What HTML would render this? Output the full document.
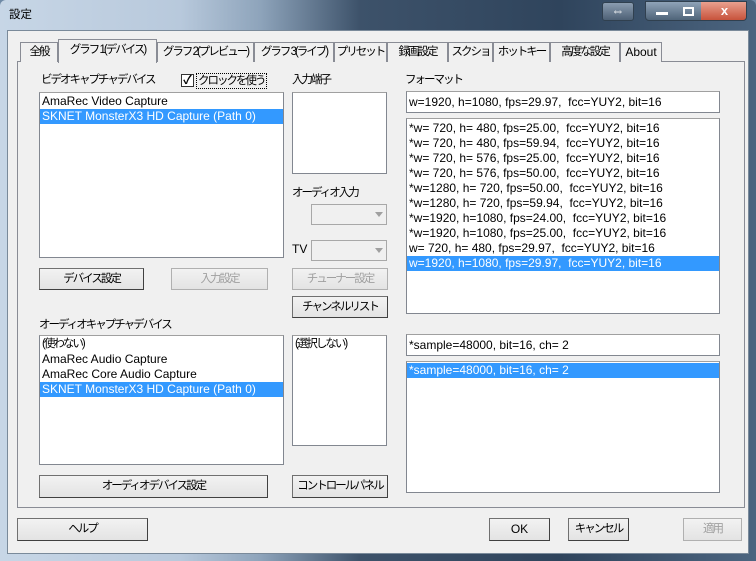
<!DOCTYPE html>
<html><head><meta charset="utf-8"><style>
*{box-sizing:border-box;margin:0;padding:0}
body{width:756px;height:561px;position:relative;overflow:hidden;background:#6f8aa6;font-family:"Liberation Sans","Noto Sans CJK JP",sans-serif;font-size:12px;color:#000}
.a{position:absolute}
.title{left:0;top:0;width:756px;height:561px;background:linear-gradient(90deg,#c7d6e6 0,#b8c9dc 180px,#8ea4bb 260px,#3d526a 360px,#2f445c 560px,#4c6580 756px);border-radius:6px 6px 0 0}
.client{left:7px;top:30px;width:742px;height:524px;background:#f0f0f0;border:1px solid #7a8a9a}
.lbl{position:absolute;white-space:nowrap;font-size:11.5px;line-height:14px;letter-spacing:-2px}
.box{position:absolute;background:#fff;border:1px solid #828790;border-top-color:#a0a0a0;white-space:nowrap;overflow:hidden}
.row{height:15px;line-height:15px;padding-left:2px;white-space:nowrap}
.j{letter-spacing:-2px;font-size:11.5px}
.sel{background:#3399ff;color:#fff}
.btn{position:absolute;white-space:nowrap;letter-spacing:-2px;background:linear-gradient(#f2f2f2,#e3e3e3);border:1px solid #707070;border-right-color:#404040;border-bottom-color:#404040;text-align:center;line-height:20px;font-size:11.5px}
.dis{color:#a0a0a0;border-color:#b0b0b0}
.tab{position:absolute;top:42px;height:20px;white-space:nowrap;letter-spacing:-2px;border:1px solid #898c95;border-bottom:none;background:#f0f0f0;line-height:18px;text-align:center;font-size:11.5px;overflow:hidden}
.combo{position:absolute;background:#f0f0f0;border:1px solid #a8a8a8}
.combo:after{content:"";position:absolute;right:3px;top:7px;border:4px solid transparent;border-top:5px solid #a0a0a0}
</style></head><body>
<div class="a title"></div>
<div class="lbl" style="left:9px;top:8px;letter-spacing:0">設定</div>
<div class="a" style="left:602px;top:2px;width:32px;height:19px;border:1px solid #30404f;border-radius:3px;background:linear-gradient(#8a9cb0,#4d6075);color:#fff;text-align:center;line-height:16px;font-size:13px">⇔</div>
<div class="a" style="left:645px;top:1px;width:102px;height:20px;border:1px solid #30404f;border-radius:0 0 4px 4px;background:linear-gradient(#8fa3b8,#4f6479);overflow:hidden">
<div class="a" style="left:10px;top:10px;width:12px;height:3px;background:#fff"></div>
<div class="a" style="left:37px;top:5px;width:11px;height:9px;border:2px solid #fff"></div>
<div class="a" style="left:55px;top:0;width:47px;height:20px;background:linear-gradient(#e8a08f,#c44a32);color:#fff;text-align:center;font-weight:bold;line-height:18px;font-size:13px">x</div>
</div>
<div class="a client"></div>
<div class="a" style="left:17px;top:61px;width:728px;height:447px;border:1px solid #898c95;background:#f0f0f0"></div>
<div class="tab" style="left:20px;width:38px">全般</div>
<div class="tab" style="left:157px;width:97px">グラフ 2(プレビュー)</div>
<div class="tab" style="left:254px;width:80px">グラフ 3(ライブ)</div>
<div class="tab" style="left:334px;width:53px">プリセット</div>
<div class="tab" style="left:387px;width:61px">録画設定</div>
<div class="tab" style="left:448px;width:45px">スクショ</div>
<div class="tab" style="left:493px;width:57px">ホットキー</div>
<div class="tab" style="left:550px;width:70px">高度な設定</div>
<div class="tab" style="left:620px;width:42px;letter-spacing:0;font-size:12px">About</div>
<div class="tab" style="left:58px;top:39px;width:99px;height:24px;background:#f0f0f0;line-height:20px;z-index:2">グラフ 1(デバイス)</div>

<div class="lbl" style="left:41px;top:73px">ビデオキャプチャデバイス</div>
<div class="a" style="left:181px;top:74px;width:13px;height:13px;border:1px solid #333;background:#fff;font-size:12px;line-height:11px;text-align:center;font-weight:bold">✓</div>
<div class="lbl" style="left:196px;top:73px;border:1px dotted #000;padding:0 1px">クロックを使う</div>
<div class="box" style="left:39px;top:92px;width:245px;height:166px;padding-top:1px">
<div class="row">AmaRec Video Capture</div>
<div class="row sel">SKNET MonsterX3 HD Capture (Path 0)</div></div>

<div class="lbl" style="left:292px;top:73px">入力端子</div>
<div class="box" style="left:292px;top:92px;width:95px;height:82px"></div>
<div class="lbl" style="left:292px;top:186px">オーディオ入力</div>
<div class="combo" style="left:311px;top:204px;width:76px;height:21px"></div>
<div class="lbl" style="left:292px;top:242px;letter-spacing:0;font-size:12px">TV</div>
<div class="combo" style="left:311px;top:240px;width:76px;height:21px"></div>

<div class="btn" style="left:39px;top:268px;width:105px;height:22px">デバイス設定</div>
<div class="btn dis" style="left:171px;top:268px;width:97px;height:22px">入力設定</div>
<div class="btn dis" style="left:292px;top:268px;width:96px;height:22px">チューナー設定</div>
<div class="btn" style="left:292px;top:296px;width:96px;height:22px">チャンネルリスト</div>

<div class="lbl" style="left:405px;top:73px">フォーマット</div>
<div class="box" style="left:406px;top:91px;width:314px;height:22px;line-height:20px;padding-left:2px">w=1920, h=1080, fps=29.97,&nbsp; fcc=YUY2, bit=16</div>
<div class="box" style="left:406px;top:118px;width:314px;height:196px;padding-top:2px">
<div class="row">*w= 720, h= 480, fps=25.00,&nbsp; fcc=YUY2, bit=16</div>
<div class="row">*w= 720, h= 480, fps=59.94,&nbsp; fcc=YUY2, bit=16</div>
<div class="row">*w= 720, h= 576, fps=25.00,&nbsp; fcc=YUY2, bit=16</div>
<div class="row">*w= 720, h= 576, fps=50.00,&nbsp; fcc=YUY2, bit=16</div>
<div class="row">*w=1280, h= 720, fps=50.00,&nbsp; fcc=YUY2, bit=16</div>
<div class="row">*w=1280, h= 720, fps=59.94,&nbsp; fcc=YUY2, bit=16</div>
<div class="row">*w=1920, h=1080, fps=24.00,&nbsp; fcc=YUY2, bit=16</div>
<div class="row">*w=1920, h=1080, fps=25.00,&nbsp; fcc=YUY2, bit=16</div>
<div class="row">w= 720, h= 480, fps=29.97,&nbsp; fcc=YUY2, bit=16</div>
<div class="row sel">w=1920, h=1080, fps=29.97,&nbsp; fcc=YUY2, bit=16</div></div>

<div class="lbl" style="left:39px;top:318px">オーディオキャプチャデバイス</div>
<div class="box" style="left:39px;top:335px;width:245px;height:130px;padding-top:1px">
<div class="row j">(使わない)</div>
<div class="row">AmaRec Audio Capture</div>
<div class="row">AmaRec Core Audio Capture</div>
<div class="row sel">SKNET MonsterX3 HD Capture (Path 0)</div></div>
<div class="box" style="left:292px;top:335px;width:95px;height:111px;padding-top:1px"><div class="row j">(選択しない)</div></div>

<div class="box" style="left:406px;top:334px;width:314px;height:22px;line-height:20px;padding-left:2px">*sample=48000, bit=16, ch= 2</div>
<div class="box" style="left:406px;top:361px;width:314px;height:132px;padding-top:1px"><div class="row sel">*sample=48000, bit=16, ch= 2</div></div>

<div class="btn" style="left:39px;top:475px;width:229px;height:23px">オーディオデバイス設定</div>
<div class="btn" style="left:292px;top:475px;width:96px;height:23px">コントロールパネル</div>

<div class="btn" style="left:17px;top:518px;width:131px;height:23px">ヘルプ</div>
<div class="btn" style="left:489px;top:518px;width:61px;height:23px;letter-spacing:0;font-size:12px">OK</div>
<div class="btn" style="left:568px;top:518px;width:61px;height:23px">キャンセル</div>
<div class="btn dis" style="left:683px;top:518px;width:59px;height:23px">適用</div>
</body></html>
